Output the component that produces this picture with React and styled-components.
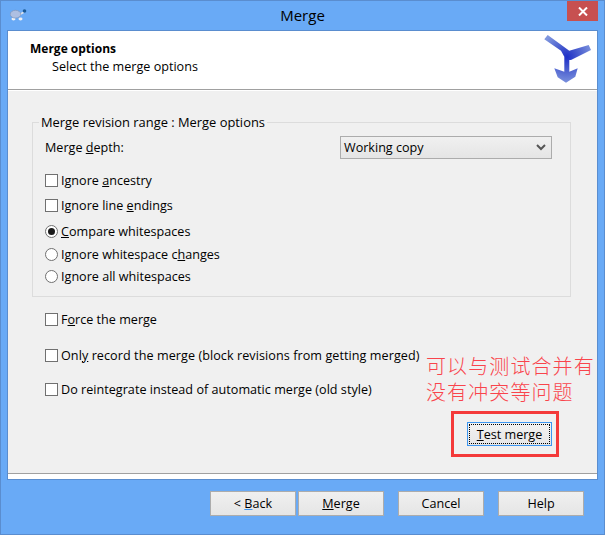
import React from 'react';
import styled, { createGlobalStyle } from 'styled-components';

const Global = createGlobalStyle`
  html, body { margin: 0; padding: 0; }
  body { font-family: "Open Sans", "Noto Sans", "Liberation Sans", sans-serif; font-size: 13px; color: #000; }
`;

const Win = styled.div`
  box-sizing: border-box;
  width: 605px;
  height: 535px;
  display: flex;
  flex-direction: column;
  padding: 0 6px;
  background: #69aaf6;
  border: 1px solid #5a8dcf;
  overflow: hidden;
`;

const TitleBar = styled.div`
  height: 29px;
  flex: none;
  display: flex;
  align-items: center;
  justify-content: center;
  position: relative;
  font-size: 15px;
  padding-bottom: 1px;
  box-sizing: border-box;
`;

const AppIcon = styled.svg`
  position: absolute;
  left: 3px;
  top: 8px;
`;

const CloseBtn = styled.div`
  position: absolute;
  right: 0;
  top: 0;
  width: 31px;
  height: 20px;
  background: #c75050;
  display: flex;
  align-items: center;
  justify-content: center;
`;

const Client = styled.div`
  box-sizing: border-box;
  flex: none;
  height: 450px;
  border: 1px solid #5a8dcf;
  background: #f0f0f0;
  display: flex;
  flex-direction: column;
`;

const Header = styled.div`
  flex: none;
  background: #fff;
  border-bottom: 1px solid #a0a0a0;
  position: relative;
  padding: 9px 0 0 22px;
  height: 49px;
  line-height: 18px;
`;

const HeaderTitle = styled.div`
  font-weight: 700;
  font-size: 12px;
`;

const HeaderSub = styled.div`
  padding-left: 22px;
  font-size: 12.6px;
`;

const Arrow = styled.svg`
  position: absolute;
  right: 4px;
  top: 4px;
`;

const Body = styled.div`
  flex: 1;
  border-top: 1px solid #fff;
  padding: 23px 26px 0 24px;
  display: flex;
  flex-direction: column;
  position: relative;
`;

const Group = styled.fieldset`
  box-sizing: border-box;
  margin: 0;
  height: 183px;
  padding: 0 0 0 12px;
  border: 1px solid #dcdcdc;
  display: flex;
  flex-direction: column;
`;

const Legend = styled.legend`
  padding: 0 2px;
  margin-left: -6px;
  font-size: 12.9px;
  line-height: 16px;
`;

const DepthRow = styled.div`
  display: flex;
  justify-content: space-between;
  align-items: center;
  height: 22px;
  margin-top: 6px;
  padding-right: 18px;
  font-size: 12.6px;
`;

const Combo = styled.div`
  box-sizing: border-box;
  width: 212px;
  height: 23px;
  display: flex;
  align-items: center;
  justify-content: space-between;
  padding: 1px 5px 0 3px;
  border: 1px solid #acacac;
  background: linear-gradient(#f0f0f0, #e5e5e5);
`;

const Row = styled.label`
  display: flex;
  align-items: center;
  height: 16px;
  margin-top: ${p => p.$gap}px;
  font-size: 12.6px;
  letter-spacing: ${p => p.$track || 0}px;
  white-space: nowrap;
`;

const Check = styled.span`
  box-sizing: border-box;
  flex: none;
  width: 13px;
  height: 13px;
  margin-right: 3px;
  background: #fff;
  border: 1px solid #707070;
`;

const Radio = styled.span`
  box-sizing: border-box;
  flex: none;
  width: 13px;
  height: 13px;
  margin-right: 3px;
  background: #fff;
  border: 1px solid #707070;
  border-radius: 50%;
  display: flex;
  align-items: center;
  justify-content: center;
  &::after {
    content: "";
    display: ${p => (p.$on ? 'block' : 'none')};
    width: 7px;
    height: 7px;
    border-radius: 50%;
    background: #1a1a1a;
  }
`;

const Options = styled.div`
  display: flex;
  flex-direction: column;
  padding-left: 13px;
`;

const TestButton = styled.div`
  box-sizing: border-box;
  align-self: flex-end;
  margin: 25px 19px 0 0;
  width: 85px;
  height: 24px;
  border: 1px solid #3c96f0;
  background: linear-gradient(#f2f2f2, #e6e6e6);
  display: flex;
  align-items: center;
  justify-content: center;
  font-size: 12.6px;
  outline: 1px dotted #000;
  outline-offset: -3px;
`;

const RedBox = styled.div`
  position: absolute;
  left: 443px;
  top: 320px;
  width: 108px;
  height: 46px;
  box-sizing: border-box;
  border: 3px solid #f43a3a;
`;

const Note = styled.div`
  position: absolute;
  left: 418px;
  top: 262px;
  font-family: "Noto Sans CJK SC", sans-serif;
  font-weight: 300;
  font-size: 20px;
  letter-spacing: 1.1px;
  line-height: 26px;
  white-space: nowrap;
  color: #f9444c;
`;

const BottomLine = styled.div`
  height: 5px;
  flex: none;
  background: #fff;
  border-top: 1px solid #a0a0a0;
`;

const Footer = styled.div`
  display: flex;
  padding: 11px 13px 0 203px;
`;

const WizBtn = styled.div`
  box-sizing: border-box;
  width: 86px;
  height: 25px;
  margin-right: ${p => p.$gap}px;
  display: flex;
  align-items: center;
  justify-content: center;
  border: 1px solid #acacac;
  background: linear-gradient(#f0f0f0, #e5e5e5);
  font-size: 12.6px;
  u { text-decoration-color: ${p => p.$under || '#000'}; }
`;

function Turtle() {
  return (
    <AppIcon width="17" height="14" viewBox="0 0 17 14">
      <ellipse cx="3.5" cy="10" rx="2" ry="1.4" fill="#eef0f4" />
      <ellipse cx="10.5" cy="10" rx="2" ry="1.4" fill="#eef0f4" />
      <path d="M9 6 L14 3" stroke="#dfe4ec" strokeWidth="1.8" />
      <ellipse cx="5.5" cy="5.2" rx="5.3" ry="3.9" fill="#aebfe2" stroke="#8496b8" strokeWidth="0.7" />
      <circle cx="14.5" cy="2" r="1.8" fill="#1c5a96" />
    </AppIcon>
  );
}

function MergeArrow() {
  return (
    <Arrow width="50" height="50" viewBox="0 0 50 50">
      <defs>
        <radialGradient id="mg" gradientUnits="userSpaceOnUse" cx="24" cy="22" r="27">
          <stop offset="0" stopColor="#1c2ec8" />
          <stop offset="0.35" stopColor="#3f52cc" />
          <stop offset="1" stopColor="#7f96de" />
        </radialGradient>
      </defs>
      <polygon
        fill="url(#mg)"
        points="1.3,4.3 4.7,0 26.3,15.7 45.7,10 48,15 28,25 26.3,25 26.3,36.7 34.7,33.3 32.3,41.7 23,47.7 14.7,42.3 11.3,33.3 21.3,36.7 21.3,21.7 18,15.7"
      />
    </Arrow>
  );
}

export default function App() {
  return (
    <Win>
      <Global />
      <TitleBar>
        <Turtle />
        Merge
        <CloseBtn>
          <svg width="10" height="9" viewBox="0 0 10 9">
            <path d="M1 0.5 L9 8.5 M9 0.5 L1 8.5" stroke="#fff" strokeWidth="2" />
          </svg>
        </CloseBtn>
      </TitleBar>
      <Client>
        <Header>
          <HeaderTitle>Merge options</HeaderTitle>
          <HeaderSub>Select the merge options</HeaderSub>
          <MergeArrow />
        </Header>
        <Body>
          <Group>
            <Legend>Merge revision range : Merge options</Legend>
            <DepthRow>
              <span>Merge <u>d</u>epth:</span>
              <Combo>
                <span>Working copy</span>
                <svg width="10" height="7" viewBox="0 0 10 7">
                  <path d="M1 1 L5 5 L9 1" fill="none" stroke="#555" strokeWidth="2" />
                </svg>
              </Combo>
            </DepthRow>
            <Row $gap={14}><Check /><span>Ignore <u>a</u>ncestry</span></Row>
            <Row $gap={9}><Check /><span>Ignore line <u>e</u>ndings</span></Row>
            <Row $gap={10}><Radio $on /><span><u>C</u>ompare whitespaces</span></Row>
            <Row $gap={7}><Radio /><span>Ignore whitespace c<u>h</u>anges</span></Row>
            <Row $gap={6}><Radio /><span>I<u>g</u>nore all whitespaces</span></Row>
          </Group>
          <Options>
            <Row $gap={14}><Check /><span>F<u>o</u>rce the merge</span></Row>
            <Row $gap={20} $track={0.07}><Check /><span>Onl<u>y</u> record the merge (block revisions from getting merged)</span></Row>
            <Row $gap={18} $track={0.02}><Check /><span>Do reintegrate instead of automatic merge (old style)</span></Row>
          </Options>
          <TestButton><span><u>T</u>est merge</span></TestButton>
          <Note>可以与测试合并有<br />没有冲突等问题</Note>
          <RedBox />
        </Body>
        <BottomLine />
      </Client>
      <Footer>
        <WizBtn $gap={2} $under="#3c96f0"><span>&lt; <u>B</u>ack</span></WizBtn>
        <WizBtn $gap={14}><span><u>M</u>erge</span></WizBtn>
        <WizBtn $gap={14}>Cancel</WizBtn>
        <WizBtn $gap={0}>Help</WizBtn>
      </Footer>
    </Win>
  );
}
